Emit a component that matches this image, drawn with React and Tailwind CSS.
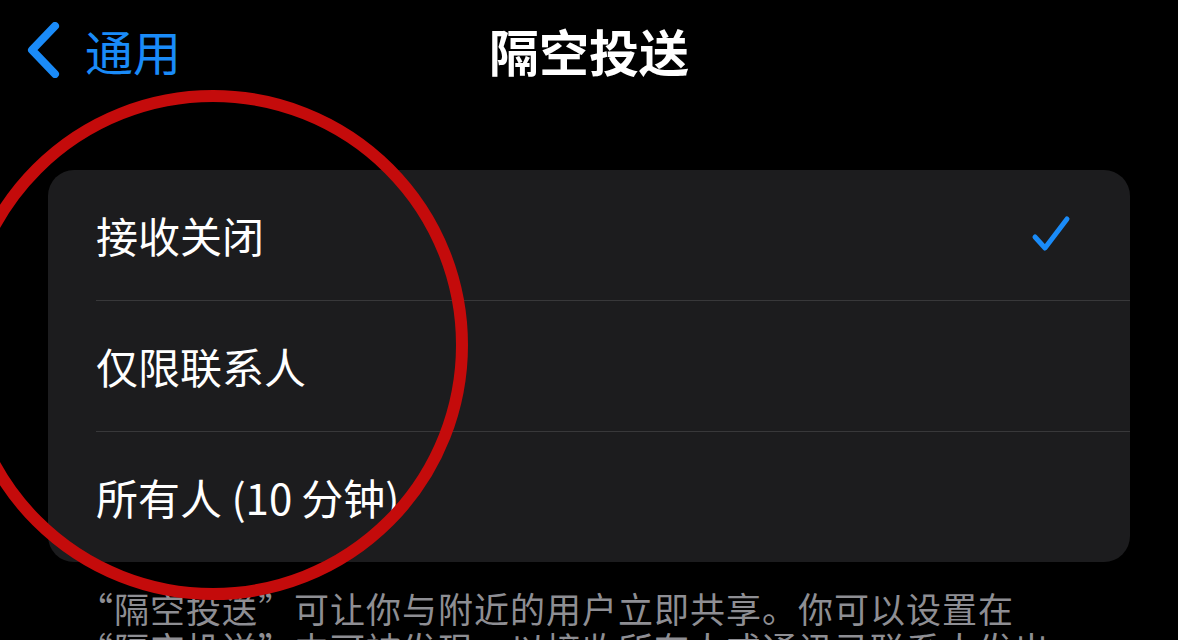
import React from "react";

const BLUE = "#1a8bf8";

function Row({ label, checked, last }) {
  return (
    <div>
      <div className="h-[130px] flex items-center justify-between pl-[48px] pr-[56px]">
        <span className="text-[42px] leading-none text-white">{label}</span>
        {checked && (
          <svg width="44" height="44" viewBox="0 0 44 44" fill="none" className="mt-[4px]">
            <path d="M5 22 L15 33 L37 4" stroke={BLUE} strokeWidth="5" strokeLinecap="round" strokeLinejoin="round" />
          </svg>
        )}
      </div>
      {!last && <div className="ml-[48px] h-px bg-[#38383a]" />}
    </div>
  );
}

export default function App() {
  return (
    <div lang="zh-CN" className="relative w-[1178px] h-[640px] overflow-hidden bg-black font-['Noto_Sans_CJK_SC','Noto_Sans',sans-serif]">
      {/* Nav bar */}
      <div className="h-[100px] grid grid-cols-[1fr_auto_1fr] items-center">
        <div className="flex items-center gap-[25px] pl-[24px]">
          <svg width="36" height="56" viewBox="0 0 36 56" fill="none">
            <path d="M31 4 L8 28 L31 52" stroke={BLUE} strokeWidth="8" strokeLinecap="round" strokeLinejoin="round" />
          </svg>
          <span className="text-[48px] leading-none text-[#1a8bf8]">通用</span>
        </div>
        <div className="text-[50px] leading-none font-bold text-white">隔空投送</div>
        <div />
      </div>

      {/* Card */}
      <div className="mt-[70px] ml-[48px] w-[1082px] rounded-[26px] bg-[#1c1c1e] overflow-hidden">
        <Row label="接收关闭" checked />
        <Row label="仅限联系人" />
        <Row
          label={
            <>
              所有人 (<span className="mr-[9px]">10</span>分钟)
            </>
          }
          last
        />
      </div>

      {/* Footer */}
      <div className="mt-[26px] ml-[96px] w-[960px] text-[35px] leading-[40px] tracking-[1px] text-[#8e8e93]">
        <span className="ml-[-18px]">“</span>隔空投送”可让你与附近的用户立即共享。你可以设置在<wbr />
        <span className="ml-[-18px]">“</span>隔空投送”中可被发现，以接收所有人或通讯录联系人发出的内容。
      </div>

      {/* Red annotation circle */}
      <svg className="absolute left-0 top-0 pointer-events-none" width="1178" height="640" viewBox="0 0 1178 640">
        <circle cx="213" cy="345" r="249" fill="none" stroke="#c40b0b" strokeWidth="12" />
      </svg>
    </div>
  );
}
